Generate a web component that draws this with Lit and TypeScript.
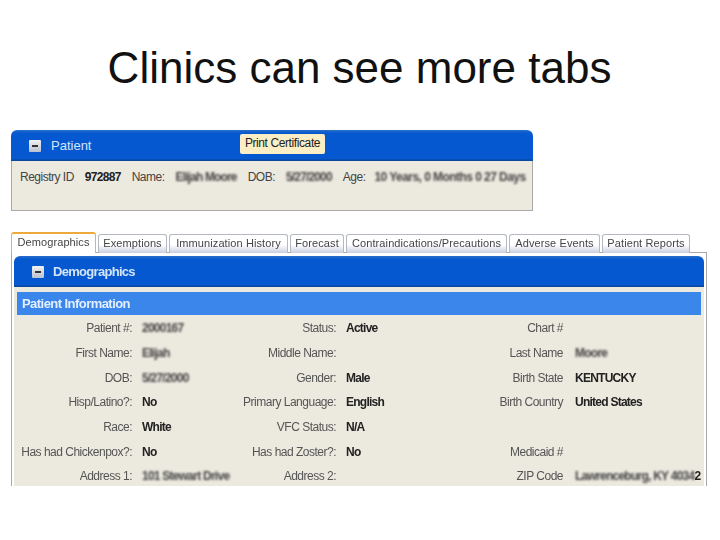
import { LitElement, html, css } from "lit";
import { customElement } from "lit/decorators.js";

const tabs = ["Demographics","Exemptions","Immunization History","Forecast","Contraindications/Precautions","Adverse Events","Patient Reports"];
type Cell = { l: string; v?: string; blur?: boolean; tail?: string };
const rows: Cell[][] = [
  [{l:"Patient #:",v:"2000167",blur:true},{l:"Status:",v:"Active"},{l:"Chart #"}],
  [{l:"First Name:",v:"Elijah",blur:true},{l:"Middle Name:"},{l:"Last Name",v:"Moore",blur:true}],
  [{l:"DOB:",v:"5/27/2000",blur:true},{l:"Gender:",v:"Male"},{l:"Birth State",v:"KENTUCKY"}],
  [{l:"Hisp/Latino?:",v:"No"},{l:"Primary Language:",v:"English"},{l:"Birth Country",v:"United States"}],
  [{l:"Race:",v:"White"},{l:"VFC Status:",v:"N/A"},{l:""}],
  [{l:"Has had Chickenpox?:",v:"No"},{l:"Has had Zoster?:",v:"No"},{l:"Medicaid #"}],
  [{l:"Address 1:",v:"101 Stewart Drive",blur:true},{l:"Address 2:"},{l:"ZIP Code",v:"Lawrenceburg, KY 4034",blur:true,tail:"2"}],
];

@customElement("app-root")
export class AppRoot extends LitElement {
  static styles = css`
    :host { display: block; width: 720px; height: 540px; background: #fff; font-family: "Liberation Sans", Arial, sans-serif; overflow: hidden; }
    .title { height: 130px; box-sizing: border-box; padding-top: 42px; text-align: center; font-size: 44px; line-height: 52px; color: #111; padding-right: 1px; }
    .soft { filter: blur(0.3px); }
    .head { display: flex; align-items: center; background: linear-gradient(#2a6fc8, #0558cf 10%, #0558cf 92%, #0a4290); border-radius: 6px 6px 0 0; height: 31px; box-sizing: border-box; color: #d4e4fa; font-size: 13px; }
    .minus { width: 12px; height: 12px; background: linear-gradient(#f2f2f2, #b9c2d0); display: flex; align-items: center; justify-content: center; flex: none; border-radius: 1px; }
    .minus i { display: block; width: 6px; height: 2px; background: #333; }
    .panel { margin-left: 11px; width: 522px; }
    .panel .head { padding-left: 18px; gap: 10px; position: relative; }
    .print { position: absolute; left: 229px; top: 4px; width: 85px; height: 20px; background: #fbeec4; border-radius: 2px; color: #222; font-size: 12px; letter-spacing: -0.4px; line-height: 19px; text-align: center; }
    .pbody { height: 50px; box-sizing: border-box; background: #ece9df; border: 1px solid #aaa; border-top: none; display: flex; gap: 11px; align-items: flex-start; padding: 9px 0 0 8px; font-size: 12px; letter-spacing: -0.5px; line-height: 14px; color: #444; white-space: nowrap; }
    .pbody b { color: #222; letter-spacing: -0.7px; }
    .pbody b.blur { color: #444; letter-spacing: -0.85px; }
    .pbody b.age { margin-left: -2px; letter-spacing: -0.55px; }
    .blur { filter: blur(1.2px); }
    .tabs { margin: 21px 0 0 11px; display: grid; grid-template-columns: 85px 69px 119px 54px 161px 91px 88px; column-gap: 2px; width: 690px; height: 21px; align-items: end; position: relative; z-index: 1; }
    .tab { height: 19px; box-sizing: border-box; border: 1px solid #b3b8c4; border-bottom: none; border-radius: 3px 3px 0 0; background: linear-gradient(#fff, #fff 55%, #c9cde0); font-size: 11px; line-height: 16px; text-align: center; color: #444; white-space: nowrap; letter-spacing: 0.1px; }
    .tab.on { height: 21px; background: #fff; border-top: 2px solid #eda93a; border-color: #eda93a #b3b8c4 #fff; line-height: 17px; }
    .frame { margin-left: 11px; width: 696px; height: 234px; box-sizing: border-box; border: 1px solid #a8a8a8; border-bottom: none; padding: 3px 2px 0 2px; overflow: hidden; background: #fff; margin-top: -1px; }
    .frame .head { padding-left: 18px; gap: 9px; font-weight: 700; font-size: 13px; letter-spacing: -0.7px; }
    .inner { background: #ece9df; padding: 5px 3px 0; height: 200px; }
    .bar { background: #3a86ea; color: #e4efff; font-weight: 700; font-size: 13px; letter-spacing: -0.55px; height: 23px; line-height: 23px; padding-left: 5px; }
    .grid { display: grid; grid-template-columns: 115px 10px 89px 105px 10px 100px 117px 12px 1fr; grid-auto-rows: 24.7px; align-items: center; font-size: 12px; padding-top: 1px; }
    .lbl { text-align: right; color: #555; white-space: nowrap; letter-spacing: -0.5px; }
    .val { color: #222; font-weight: 700; white-space: nowrap; letter-spacing: -0.75px; display: flex; }
    .val .blur { color: #444; }
  `;
  render() {
    return html`
      <div class="title">Clinics can see more tabs</div>
      <div class="panel soft">
        <div class="head"><span class="minus"><i></i></span>Patient<span class="print">Print Certificate</span></div>
        <div class="pbody">
          <span>Registry ID</span><b>972887</b><span>Name:</span>
          <b class="blur">Elijah Moore</b><span>DOB:</span>
          <b class="blur">5/27/2000</b><span>Age:</span>
          <b class="blur age">10 Years, 0 Months 0 27 Days</b>
        </div>
      </div>
      <div class="tabs soft">${tabs.map((t, i) => html`<div class="tab ${i === 0 ? "on" : ""}">${t}</div>`)}</div>
      <div class="frame soft">
        <div class="head"><span class="minus"><i></i></span>Demographics</div>
        <div class="inner">
          <div class="bar">Patient Information</div>
          <div class="grid">
            ${rows.map((r) => r.map((c) => html`<div class="lbl">${c.l}</div><div></div><div class="val"><span class="${c.blur ? "blur" : ""}">${c.v ?? ""}</span>${c.tail ?? ""}</div>`))}
          </div>
        </div>
      </div>
    `;
  }
}
